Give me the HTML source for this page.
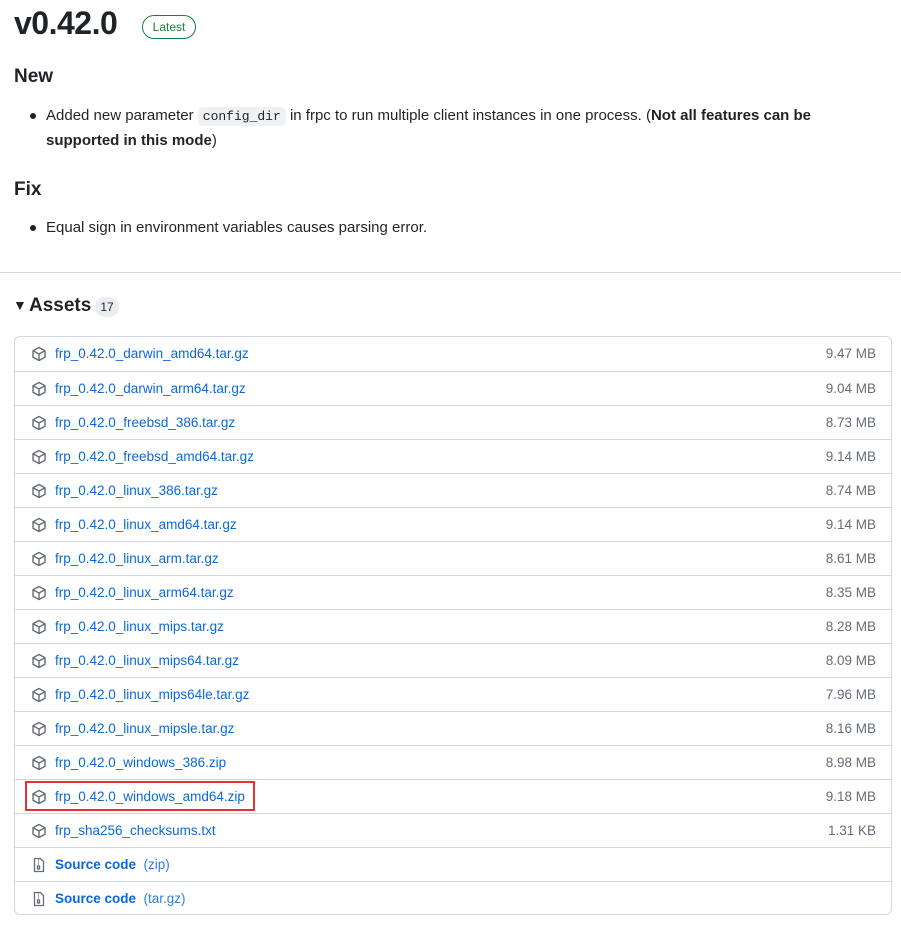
<!DOCTYPE html>
<html><head><meta charset="utf-8"><style>
*{margin:0;padding:0;box-sizing:border-box}
body{width:901px;height:926px;background:#fff;font-family:"Liberation Sans",sans-serif;color:#1f2328;position:relative;overflow:hidden}
.a{position:absolute}
h1{position:absolute;left:14px;top:5px;font-size:32px;font-weight:600;letter-spacing:-0.5px}
.badge{position:absolute;left:142px;top:15px;width:54px;height:24px;border:1px solid #1a7f37;border-radius:12px;color:#1a7f37;font-size:12px;text-align:center;line-height:22px}
h2{position:absolute;left:14px;font-size:19px;font-weight:600}
.li{position:absolute;left:46px;font-size:15px;line-height:24px;width:830px}
.dot{position:absolute;left:30px;width:6px;height:6px;border-radius:3px;background:#1f2328}
code{font-family:"Liberation Mono",monospace;font-size:13px;background:#eff1f3;padding:2px 5px;border-radius:5px}
.sep{position:absolute;left:0;top:272px;width:901px;height:1px;background:#d0d7de}
.box{position:absolute;left:14px;top:336px;width:878px;height:579px;border:1px solid #d0d7de;border-radius:6px}
.row{position:absolute;left:0;width:876px;height:34px;border-top:1px solid #d0d7de}
.row:first-child{border-top:none}
.row svg{position:absolute;left:16px;top:9px}
.nm{position:absolute;left:40px;top:9px;font-size:13.5px;color:#0969da}
.sz{position:absolute;right:15px;top:9px;font-size:13.5px;color:#656d76}
</style></head><body>
<h1>v0.42.0</h1>
<div class="badge">Latest</div>
<h2 style="top:66px">New</h2>
<div class="dot" style="top:113px"></div>
<div class="li" style="top:104px">Added new parameter <code>config_dir</code> in frpc to run multiple client instances in one process. (<b>Not all features can be supported in this mode</b>)</div>
<h2 style="top:179px">Fix</h2>
<div class="dot" style="top:225px"></div>
<div class="li" style="top:216px">Equal sign in environment variables causes parsing error.</div>
<div class="sep"></div>
<div class="a" style="left:13px;top:297px;font-size:14px">▼</div>
<div class="a" style="left:29px;top:295px;font-size:19px;font-weight:600">Assets</div>
<div class="a" style="left:95px;top:297px;width:24px;height:20px;border-radius:10px;background:#eaeef2;font-size:12px;text-align:center;line-height:20px">17</div>
<div class="box" id="box"></div>
<div class="a" style="left:25px;top:781px;width:230px;height:30px;border:2px solid #e5312f"></div>
<script>
var rows=[["frp_0.42.0_darwin_amd64.tar.gz","9.47 MB"],["frp_0.42.0_darwin_arm64.tar.gz","9.04 MB"],["frp_0.42.0_freebsd_386.tar.gz","8.73 MB"],["frp_0.42.0_freebsd_amd64.tar.gz","9.14 MB"],["frp_0.42.0_linux_386.tar.gz","8.74 MB"],["frp_0.42.0_linux_amd64.tar.gz","9.14 MB"],["frp_0.42.0_linux_arm.tar.gz","8.61 MB"],["frp_0.42.0_linux_arm64.tar.gz","8.35 MB"],["frp_0.42.0_linux_mips.tar.gz","8.28 MB"],["frp_0.42.0_linux_mips64.tar.gz","8.09 MB"],["frp_0.42.0_linux_mips64le.tar.gz","7.96 MB"],["frp_0.42.0_linux_mipsle.tar.gz","8.16 MB"],["frp_0.42.0_windows_386.zip","8.98 MB"],["frp_0.42.0_windows_amd64.zip","9.18 MB"],["frp_sha256_checksums.txt","1.31 KB"]];
var pkg='<svg width="16" height="16" viewBox="0 0 16 16" fill="none" stroke="#656d76" stroke-width="1.4" stroke-linejoin="round"><path d="M8 1.5 14 4.8v6.4L8 14.5 2 11.2V4.8Z"/><path d="M2 4.8 8 8l6-3.2M8 8v6.5"/></svg>';
var zip='<svg width="16" height="16" viewBox="0 0 16 16" fill="none" stroke="#656d76" stroke-width="1.3"><path d="M3.5 1.5h6l3 3v10h-9z"/><path d="M7 3h1M7 5h1M7 7h1M6.5 9h2v3h-2z"/></svg>';
var h='';
rows.forEach(function(r,i){h+='<div class="row" style="top:'+(i*34)+'px">'+pkg+'<span class="nm">'+r[0]+'</span><span class="sz">'+r[1]+'</span></div>'});
h+='<div class="row" style="top:510px">'+zip+'<span class="nm"><b style="font-weight:600">Source code</b> <span style="opacity:.85">&nbsp;(zip)</span></span></div>';
h+='<div class="row" style="top:544px">'+zip+'<span class="nm"><b style="font-weight:600">Source code</b> <span style="opacity:.85">&nbsp;(tar.gz)</span></span></div>';
document.getElementById('box').innerHTML=h;
</script>
</body></html>
